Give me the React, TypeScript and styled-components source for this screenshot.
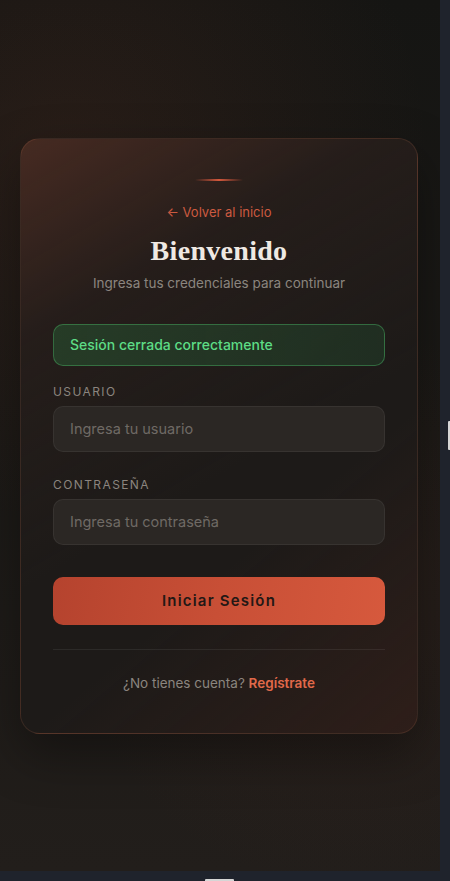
import React from "react";
import styled, { createGlobalStyle } from "styled-components";

const GlobalStyle = createGlobalStyle`
  * { box-sizing: border-box; }
  html, body { margin: 0; padding: 0; background: #1f232c; }
  body { font-family: "Inter", "Noto Sans", sans-serif; }
`;

const Shell = styled.div`
  display: grid;
  grid-template-columns: 440px 10px;
  grid-template-rows: 871px 10px;
  width: 450px;
  height: 881px;
  overflow: hidden;
  background: #1f232c;
`;

const Stage = styled.main`
  display: flex;
  align-items: center;
  padding-left: 20px;
  background:
    radial-gradient(circle at 15% 18%, rgba(120, 60, 40, 0.18) 0%, rgba(120, 60, 40, 0) 45%),
    radial-gradient(circle at 80% 70%, rgba(110, 50, 35, 0.12) 0%, rgba(110, 50, 35, 0) 40%),
    linear-gradient(180deg, #151513 0%, #1b1916 50%, #221e1b 100%);
`;

const Track = styled.div<{ $vertical?: boolean }>`
  position: relative;
  background: #1f232c;
  grid-column: ${(p) => (p.$vertical ? "2" : "1 / span 2")};
  grid-row: ${(p) => (p.$vertical ? "1" : "2")};
`;

const Thumb = styled.div<{ $vertical?: boolean }>`
  position: absolute;
  background: #d6d6d6;
  border-radius: 1px;
  ${(p) =>
    p.$vertical
      ? "left: 8px; top: 421px; width: 4px; height: 29px;"
      : "left: 205px; top: 8px; width: 29px; height: 4px;"}
`;

const Card = styled.section`
  width: 398px;
  display: flex;
  flex-direction: column;
  align-items: center;
  padding: 40px 32px 41px;
  border-radius: 20px;
  border: 1px solid rgba(190, 120, 90, 0.16);
  background:
    linear-gradient(150deg, rgba(120, 62, 45, 0.45) 0%, rgba(60, 38, 32, 0.25) 25%, rgba(30, 27, 25, 0) 55%),
    linear-gradient(320deg, rgba(90, 40, 28, 0.28) 0%, rgba(40, 30, 26, 0) 35%),
    #1d1a18;
  box-shadow: 0 20px 50px rgba(0, 0, 0, 0.35);
`;

const Accent = styled.div`
  width: 48px;
  height: 2px;
  border-radius: 1px;
  background: linear-gradient(90deg, rgba(200, 85, 61, 0), #d4583c 50%, rgba(200, 85, 61, 0));
`;

const BackLink = styled.a`
  margin-top: 22px;
  font-size: 13px;
  line-height: 18px;
  color: #cc5a40;
  text-decoration: none;
`;

const Title = styled.h1`
  margin: 13px 0 0;
  font-family: "Liberation Serif", "DejaVu Serif", serif;
  font-weight: 700;
  font-size: 28px;
  line-height: 34px;
  color: #efe9e3;
  letter-spacing: 0.3px;
`;

const Subtitle = styled.p`
  margin: 6px 0 0;
  font-size: 13.5px;
  line-height: 18px;
  color: #8b857f;
`;

const Alert = styled.div`
  align-self: stretch;
  margin-top: 32px;
  height: 42px;
  display: flex;
  align-items: center;
  padding: 0 16px;
  border-radius: 10px;
  border: 1px solid rgba(74, 180, 100, 0.45);
  background: linear-gradient(90deg, rgba(40, 85, 50, 0.55), rgba(35, 70, 45, 0.45));
  color: #5ddc85;
  font-size: 14px;
  font-weight: 500;
`;

const Field = styled.div<{ $gap: number }>`
  align-self: stretch;
  display: flex;
  flex-direction: column;
  gap: 6px;
  margin-top: ${(p) => p.$gap}px;
`;

const Label = styled.label`
  font-size: 12px;
  line-height: 16px;
  letter-spacing: 1.4px;
  text-transform: uppercase;
  color: #8b857f;
`;

const Input = styled.input`
  height: 46px;
  width: 100%;
  padding: 0 16px;
  border-radius: 10px;
  border: 1px solid rgba(255, 255, 255, 0.06);
  background: #2b2724;
  color: #e9e3dd;
  font-family: inherit;
  font-size: 14.5px;
  outline: none;
  &::placeholder { color: #6f6a65; }
`;

const Submit = styled.button`
  align-self: stretch;
  margin-top: 32px;
  height: 48px;
  border: none;
  border-radius: 10px;
  background: linear-gradient(100deg, #b5432e 0%, #c84f36 50%, #d6593d 100%);
  color: #231815;
  font-family: inherit;
  font-size: 15px;
  font-weight: 600;
  letter-spacing: 1.2px;
  cursor: pointer;
`;

const Divider = styled.hr`
  align-self: stretch;
  margin: 24px 0 0;
  border: none;
  border-top: 1px solid rgba(255, 255, 255, 0.07);
`;

const Footer = styled.p`
  margin: 24px 0 0;
  font-size: 13.5px;
  line-height: 18px;
  color: #8b857f;
`;

const Register = styled.a`
  color: #e0694a;
  font-weight: 600;
  text-decoration: none;
`;

export default function App() {
  return (
    <>
      <GlobalStyle />
      <Shell>
        <Stage>
          <Card>
            <Accent />
            <BackLink href="#">← Volver al inicio</BackLink>
            <Title>Bienvenido</Title>
            <Subtitle>Ingresa tus credenciales para continuar</Subtitle>
            <Alert>Sesión cerrada correctamente</Alert>
            <Field $gap={18}>
              <Label>Usuario</Label>
              <Input placeholder="Ingresa tu usuario" />
            </Field>
            <Field $gap={25}>
              <Label>Contraseña</Label>
              <Input type="password" placeholder="Ingresa tu contraseña" />
            </Field>
            <Submit>Iniciar Sesión</Submit>
            <Divider />
            <Footer>
              ¿No tienes cuenta? <Register href="#">Regístrate</Register>
            </Footer>
          </Card>
        </Stage>
        <Track $vertical>
          <Thumb $vertical />
        </Track>
        <Track>
          <Thumb />
        </Track>
      </Shell>
    </>
  );
}
